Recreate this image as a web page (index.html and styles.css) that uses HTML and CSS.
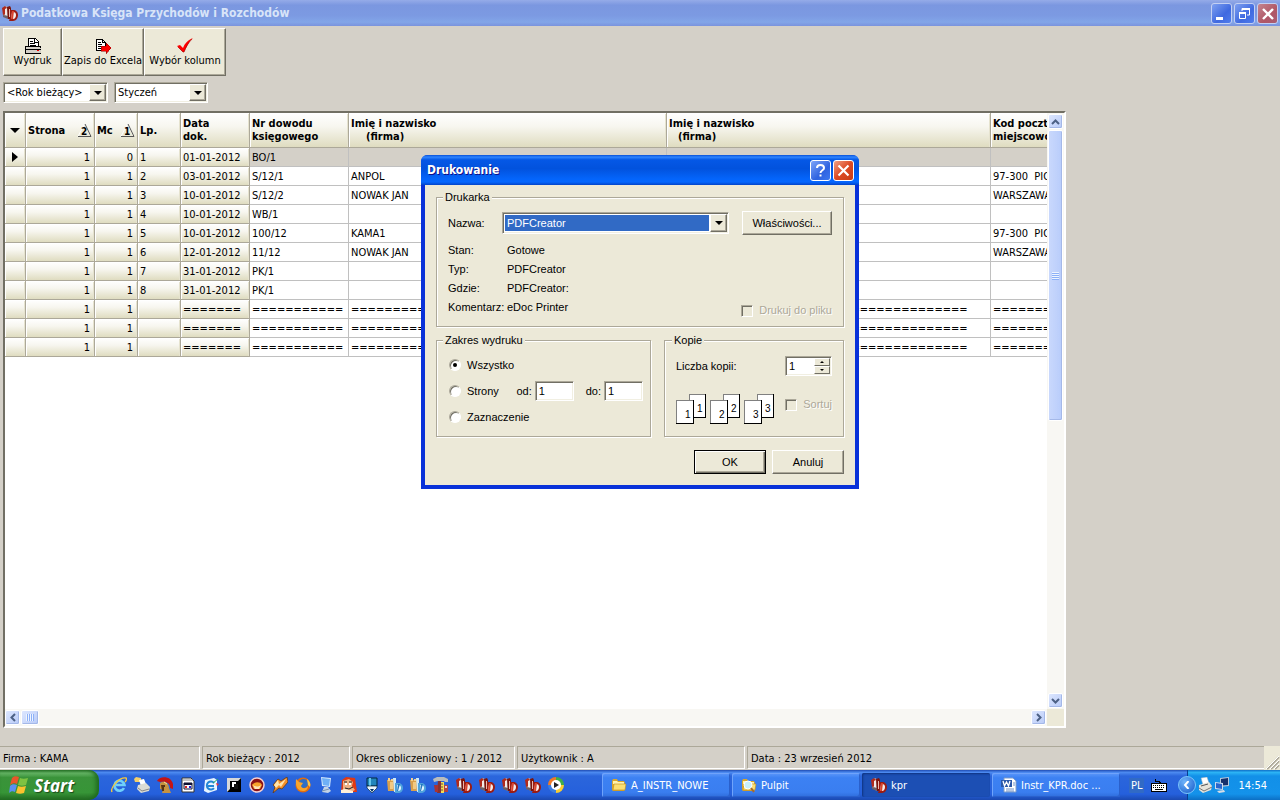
FILE: index.html
```html
<!DOCTYPE html>
<html lang="pl">
<head>
  <meta charset="UTF-8">
  <meta name="viewport" content="width=device-width, initial-scale=1.0">
  <title>Podatkowa Księga Przychodów i Rozchodów</title>
  <link rel="stylesheet" href="styles.css">
</head>
<body>
  <!-- Ikony -->
  <svg class="sprites" width="0" height="0" aria-hidden="true">
    <symbol id="kpr" viewBox="0 0 16 16">
      <path d="M1 3l3-2 5 3v9l-3 1-5-3z" fill="#b8a9a6"/>
      <path d="M0 3l3-2 2 2-1 6-3 1z" fill="#b02a1c"/>
      <path d="M3 4l2-1v8l-2-1z" fill="#f2ebe8"/>
      <path d="M1 10l5 1v3l-5-2z" fill="#6e5f66"/>
      <path d="M5 2l3-1 1 2v11H6z" fill="#7c140c"/>
      <path d="M7 4h1v8H7z" fill="#e8b8ac"/>
      <path d="M8 5h3c3 0 5 2 5 5s-2 6-5 6H7l1-3z" fill="#9b1c12"/>
      <path d="M10 7h1c2 0 3 1 3 3s-1 4-3 4h-2z" fill="#f6ece8"/>
      <path d="M10 6h2l-1 8H9z" fill="#d8442e"/>
    </symbol>
    <symbol id="kprblue" viewBox="0 0 16 16">
      <path d="M0 3h7v11H1z" fill="#d9a04c"/>
      <path d="M1 1h2v3H1zM4 2h2v2H4z" fill="#f3cf8d"/>
      <path d="M3 5h3v7H3z" fill="#f1c982"/>
      <path d="M6 1h3v14H7z" fill="#cfeaf8"/>
      <path d="M8 6h3c3 0 5 2 5 5s-2 5-5 5H8z" fill="#4fa3dc"/>
      <path d="M10 8h1c2 0 3 1 3 3s-1 3-3 3h-1z" fill="#e6f6ff"/>
      <path d="M11 7h2l-2 7h-1z" fill="#2478c0"/>
    </symbol>
    <symbol id="folder" viewBox="0 0 16 16">
      <path d="M1 4l1-2h4l1 2h6l1 2v7l-1 1H2l-1-1z" fill="#d9a62c"/>
      <path d="M2 4h4l1 1h6v2H2z" fill="#fff3ae"/>
      <path d="M3 7h12l-1 6H2z" fill="#fbdf72" stroke="#c08c1a" stroke-width=".6"/>
    </symbol>
  </svg>

  <div class="app">
    <header class="titlebar">
      <svg class="icon"><use href="#kpr"/></svg>
      <h1>Podatkowa Księga Przychodów i Rozchodów</h1>
      <div class="window-buttons">
        <button type="button" class="win-btn" aria-label="Minimalizuj">
          <svg width="20" height="20" viewBox="0 0 20 20"><path d="M4 13h7v3H4z" fill="#fff"/></svg>
        </button>
        <button type="button" class="win-btn" aria-label="Przywróć">
          <svg width="20" height="20" viewBox="0 0 20 20" fill="none" stroke="#fff"><path d="M7 7V4.500h7.500V11H12"/><path d="M7 5h8" stroke-width="2"/><path d="M4.500 8.500h6v6h-6z"/><path d="M4 9h7" stroke-width="2"/></svg>
        </button>
        <button type="button" class="win-btn win-close" aria-label="Zamknij">
          <svg width="20" height="20" viewBox="0 0 20 20"><path d="M5 5l10 10M15 5L5 15" stroke="#fff" stroke-width="2.400"/></svg>
        </button>
      </div>
    </header>

    <nav class="toolbar">
      <button type="button" class="tool tool-small">
        <svg class="icon" viewBox="0 0 16 16" shape-rendering="crispEdges">
          <path d="M3 8V0h7l3 3v5z" fill="#fff" stroke="#000"/>
          <path d="M9 0v4h4M5 3h3M5 5h5M5 7h6" fill="none" stroke="#000"/>
          <path d="M1 8h14l1 2v5H0v-5z" fill="#d4d0c8" stroke="#000"/>
          <path d="M0 11h16" stroke="#000"/>
          <path d="M12 12h2v1h-2z" fill="#e00"/>
        </svg>
        Wydruk
      </button>
      <button type="button" class="tool">
        <svg class="icon" viewBox="0 0 16 16" shape-rendering="crispEdges">
          <path d="M1 1h6l3 3v8H1z" fill="#fff" stroke="#000"/>
          <path d="M3 4h3M3 6h4M3 8h4M3 10h3M7 1v3h3" fill="none" stroke="#000"/>
          <path d="M6 8h5V5l5 5-5 6v-3H6z" fill="#f00" stroke="#800" stroke-width=".5"/>
        </svg>
        Zapis do Excela
      </button>
      <button type="button" class="tool">
        <svg class="icon" viewBox="0 0 16 16"><path d="M0 8l3-1 3 3c2-5 5-8 10-10-4 3-6 8-9 14H6z" fill="#f00"/><path d="M1 9l5 5h1c2-5 4-9 8-13" fill="none" stroke="#a00" stroke-width=".7"/></svg>
        Wybór kolumn
      </button>
    </nav>

    <div class="filters">
      <span class="combo combo-year">
        <select aria-label="Rok"><option>&lt;Rok bieżący&gt;</option></select>
        <span class="combo-arrow"></span>
      </span>
      <span class="combo combo-month">
        <select aria-label="Miesiąc"><option>Styczeń</option></select>
        <span class="combo-arrow"></span>
      </span>
    </div>

    <!-- Tabela księgi -->
    <main class="grid-panel">
      <div class="grid-view">
        <table class="ledger">
          <colgroup>
            <col class="c-mark"><col class="c-page"><col class="c-mc"><col class="c-lp"><col class="c-date">
            <col class="c-doc"><col class="c-name"><col class="c-name2"><col class="c-post">
          </colgroup>
          <thead>
            <tr>
              <th><span class="tri-down"></span></th>
              <th><div class="sorted">Strona <svg class="sort" width="15" height="15" viewBox="0 0 15 15"><path d="M7.500 1L1 13.500h13z" fill="#ece9d8" stroke="#fff"/><path d="M8 1l6 12.500H1" fill="none" stroke="#555"/><text x="4" y="12">2</text></svg></div></th>
              <th><div class="sorted">Mc <svg class="sort" width="15" height="15" viewBox="0 0 15 15"><path d="M7.500 1L1 13.500h13z" fill="#ece9d8" stroke="#fff"/><path d="M8 1l6 12.500H1" fill="none" stroke="#555"/><text x="4" y="12">1</text></svg></div></th>
              <th>Lp.</th>
              <th>Data<br>dok.</th>
              <th>Nr dowodu<br>księgowego</th>
              <th>Imię i nazwisko<br><span class="indent">(firma)</span></th>
              <th>Imię i nazwisko<br><span class="indent indent-small">(firma)</span></th>
              <th>Kod pocztowy<br>miejscowość</th>
            </tr>
          </thead>
          <tbody>
            <tr class="current"><td><span class="tri-right"></span></td><td>1</td><td>0</td><td>1</td><td>01-01-2012</td><td>BO/1</td><td></td><td></td><td></td></tr>
            <tr><td></td><td>1</td><td>1</td><td>2</td><td>03-01-2012</td><td>S/12/1</td><td>ANPOL</td><td></td><td>97-300&nbsp; PIOTRKÓW</td></tr>
            <tr><td></td><td>1</td><td>1</td><td>3</td><td>10-01-2012</td><td>S/12/2</td><td>NOWAK JAN</td><td></td><td>WARSZAWA</td></tr>
            <tr><td></td><td>1</td><td>1</td><td>4</td><td>10-01-2012</td><td>WB/1</td><td></td><td></td><td></td></tr>
            <tr><td></td><td>1</td><td>1</td><td>5</td><td>10-01-2012</td><td>100/12</td><td>KAMA1</td><td></td><td>97-300&nbsp; PIOTRKÓW</td></tr>
            <tr><td></td><td>1</td><td>1</td><td>6</td><td>12-01-2012</td><td>11/12</td><td>NOWAK JAN</td><td></td><td>WARSZAWA</td></tr>
            <tr><td></td><td>1</td><td>1</td><td>7</td><td>31-01-2012</td><td>PK/1</td><td></td><td></td><td></td></tr>
            <tr><td></td><td>1</td><td>1</td><td>8</td><td>31-01-2012</td><td>PK/1</td><td></td><td></td><td></td></tr>
            <tr><td></td><td>1</td><td>1</td><td></td><td>=======</td><td>===========</td><td>====================================</td><td>====================================</td><td>===========</td></tr>
            <tr><td></td><td>1</td><td>1</td><td></td><td>=======</td><td>===========</td><td>====================================</td><td>====================================</td><td>===========</td></tr>
            <tr><td></td><td>1</td><td>1</td><td></td><td>=======</td><td>===========</td><td>====================================</td><td>====================================</td><td>===========</td></tr>
          </tbody>
        </table>
      </div>
      <div class="scroll scroll-v">
        <button type="button" class="scroll-btn" aria-label="W górę"><svg width="9" height="6" viewBox="0 0 9 6"><path d="M1 5l3.500-3.500L8 5"/></svg></button>
        <div class="thumb thumb-v"><span class="grip-v"></span></div>
        <button type="button" class="scroll-btn scroll-end" aria-label="W dół"><svg width="9" height="6" viewBox="0 0 9 6"><path d="M1 1l3.500 3.500L8 1"/></svg></button>
      </div>
      <div class="scroll scroll-h">
        <button type="button" class="scroll-btn" aria-label="W lewo"><svg width="6" height="9" viewBox="0 0 6 9"><path d="M5 1L1.500 4.500 5 8"/></svg></button>
        <div class="thumb thumb-h"><span class="grip-h"></span></div>
        <button type="button" class="scroll-btn scroll-end" aria-label="W prawo"><svg width="6" height="9" viewBox="0 0 6 9"><path d="M1 1l3.500 3.500L1 8"/></svg></button>
      </div>
      <div class="corner"></div>
    </main>

    <footer class="statusbar">
      <div class="st st-company">Firma : KAMA</div>
      <div class="st st-year">Rok bieżący : 2012</div>
      <div class="st st-period">Okres obliczeniowy : 1 / 2012</div>
      <div class="st st-user">Użytkownik : A</div>
      <div class="st st-date">Data : 23 wrzesień 2012</div>
      <svg class="size-grip" width="16" height="24" viewBox="0 0 16 24"><path d="M3 23L15 11M7 23l8-8M11 23l4-4" stroke="#aca899" stroke-width="2"/><path d="M2 23L15 10M6 23l9-9M10 23l5-5" stroke="#fff"/></svg>
    </footer>

    <!-- Pasek zadań -->
    <div class="taskbar">
      <button type="button" class="start">
        <svg width="20" height="20" viewBox="0 0 20 20">
          <path d="M3 3c2-2 4-2 7-1L8 9C6 8 4 8 1 10z" fill="#e8562a"/>
          <path d="M11 3c2 1 5 1 8 0l-2 7c-3 1-5 1-8 0z" fill="#7fc242"/>
          <path d="M1 11c2-2 4-2 7-1l-2 7c-2-1-4-1-6 1z" fill="#5a8ff0"/>
          <path d="M9 11c2 1 5 1 8 0l-2 7c-3 1-5 1-8 0z" fill="#fbc22e"/>
        </svg>
        <span>Start</span>
      </button>

      <div class="quick">
        <svg class="icon" viewBox="0 0 16 16"><path d="M13 11a5 5 0 1 1 .5-3H5" fill="none" stroke="#6fd0fb" stroke-width="2.600"/><path d="M1 15C-1 11 8 0 15 1c1 1 0 3-1 4" fill="none" stroke="#f5c83c" stroke-width="1.400"/></svg>
        <svg class="icon" viewBox="0 0 16 16"><path d="M0 2l2-2 5 1v4H1z" fill="#f4cf6a"/><path d="M5 3l5-1 2 5-5 2z" fill="#fff"/><path d="M4 8l8-2 4 4-1 4-8 2-4-4z" fill="#dcdcd4"/><path d="M4 11l4 3 7-2" fill="none" stroke="#888"/></svg>
        <svg class="icon" viewBox="0 0 16 16"><path d="M0 4c2-5 14-6 16 3v5l-3-1c1-5-5-7-10-6z" fill="#c41414"/><path d="M3 6c4-3 9 0 9 5l2 5H5l1-3-3-1z" fill="#c69240"/><path d="M4 8h4v2H7v4H5z" fill="#5a3410"/><path d="M7 5l3 2" stroke="#ffe08a"/></svg>
        <svg class="icon" viewBox="0 0 16 16"><path d="M2 1h9l3 3v11H2z" fill="#fff" stroke="#333"/><path d="M2 3h11" stroke="#888"/><path d="M4 6h8v6H4z" fill="#fff" stroke="#113"/><path d="M4 6h8v2H4z" fill="#113"/><path d="M5 9h2v2H5z" fill="#d22"/><path d="M9 9h2v2H9z" fill="#22d"/></svg>
        <svg class="icon" viewBox="0 0 16 16"><path d="M2 3l9-2 3 2v10l-9 3-4-2z" fill="#e7f4ff"/><path d="M11 6a4 4 0 1 0 0 5M5 9h6" fill="none" stroke="#2285d6" stroke-width="2"/><path d="M10 6l5-4" stroke="#2a6"/><path d="M13 6l3 1-2 2z" fill="#e33"/></svg>
        <svg class="icon" viewBox="0 0 16 16"><path d="M1 1h14v14H1z" fill="#000"/><path d="M1 1h14l-3 3H4v8l-3 3z" fill="#d8d8d8"/><path d="M6 5h4v5H6z" fill="#fff"/><path d="M8 7h4v5H8z" fill="#111"/></svg>
        <svg class="icon" viewBox="0 0 16 16"><circle cx="8" cy="8" r="7" fill="#8c1014" stroke="#f6cfd0" stroke-width="1.500"/><path d="M3 8c2-3 8-4 10 0l-2 4H5z" fill="#f8a32b"/><path d="M4 8c3 2 5 2 8 0l-2 4H6z" fill="#ffe3bb"/></svg>
        <svg class="icon" viewBox="0 0 16 16"><path d="M1 8l5-6 3 2 6-4 1 5-6 7-3-1-6 5 2-6z" fill="#f5902a" stroke="#5c3a20" stroke-width=".8"/><path d="M2 8l4-5 1 4 7-5-5 8-2-2-3 3z" fill="#ffe5b0"/></svg>
        <svg class="icon" viewBox="0 0 16 16"><circle cx="8" cy="8" r="7.500" fill="#e06c10"/><circle cx="8.500" cy="6.500" r="4.500" fill="#2e6fc4"/><path d="M1 2l3 3 4 1-2 3c1 3 5 3 7 0 0 3-2 5-5 5-4 0-8-3-7-12z" fill="#f8a52b"/><path d="M12 2c3 2 4 5 3 8l-2-2z" fill="#fbc648"/></svg>
        <svg class="icon" viewBox="0 0 16 16"><path d="M3 0l10 1-1 9-8-1z" fill="#d4e8fc"/><path d="M4 1l8 1-1 7-6-1z" fill="#6fb0f6"/><path d="M6 10h4l3 4-3 2-6-1z" fill="#c3d3e6"/><path d="M4 14l7-2" stroke="#7690ae"/></svg>
        <svg class="icon" viewBox="0 0 16 16"><path d="M1 3l4-3 9 1 2 14H0z" fill="#e03a14"/><path d="M2 4l6-2 4 3-1 4 3 4-6 3-6-2z" fill="#edb184"/><path d="M3 5h3M8 5h3M4 11l4 1 4-2" stroke="#222" fill="none"/><path d="M4 6h2v2H4zM8 6h2v2H8z" fill="#fff"/><path d="M0 13l4-1 8 2v2H0z" fill="#fff0d8"/></svg>
        <svg class="icon" viewBox="0 0 16 16"><path d="M3 1h10v8H3z" fill="#2186bc" stroke="#03263f"/><path d="M5 1h2v8H5z" fill="#65c5ea"/><path d="M3 9h10v2l-5 5-5-5z" fill="#eaf4fa" stroke="#03263f" stroke-width=".7"/><path d="M6 12h4l-2 3z" fill="#036"/></svg>
        <svg class="icon"><use href="#kprblue"/></svg>
        <svg class="icon"><use href="#kprblue"/></svg>
        <svg class="icon" viewBox="0 0 16 16"><path d="M0 2l4-2h7l4 2v3h-3L11 4H5L1 5z" fill="#b9bcbc"/><path d="M5 4h3v12H4z" fill="#863232"/><path d="M1 8h4v7H2z" fill="#a33"/><path d="M8 5h3v11H8z" fill="#f5dc54"/><path d="M11 8h4v7h-4z" fill="#b34444"/><path d="M8 7h2M8 10h2M8 13h2" stroke="#654"/><path d="M12 9h2v2h-2z" fill="#ecc"/></svg>
        <svg class="icon"><use href="#kpr"/></svg>
        <svg class="icon"><use href="#kpr"/></svg>
        <svg class="icon"><use href="#kpr"/></svg>
        <svg class="icon"><use href="#kpr"/></svg>
        <svg class="icon" viewBox="0 0 16 16"><path d="M8 0a8 8 0 0 0-8 8h8z" fill="#ef7a26"/><path d="M8 0a8 8 0 0 1 8 8H8z" fill="#3fae48"/><path d="M16 8a8 8 0 0 1-8 8V8z" fill="#f9cd31"/><path d="M8 16a8 8 0 0 1-8-8h8z" fill="#3a7de0"/><circle cx="8" cy="8" r="5" fill="#fff"/><path d="M6 5l5 3-5 3z" fill="#222"/></svg>
      </div>

      <div class="tasks">
        <button type="button" class="task"><svg class="icon"><use href="#folder"/></svg>A_INSTR_NOWE</button>
        <button type="button" class="task"><svg class="icon" viewBox="0 0 16 16"><use href="#folder"/><circle cx="7" cy="8" r="4" fill="#c9f0fb" stroke="#fff"/><path d="M10 11l3 4" stroke="#a8682c" stroke-width="2"/></svg>Pulpit</button>
        <button type="button" class="task task-active"><svg class="icon"><use href="#kpr"/></svg>kpr</button>
        <button type="button" class="task"><svg class="icon" viewBox="0 0 16 16"><path d="M3 1h9l3 3v11H3z" fill="#fff" stroke="#7f9cc8"/><path d="M12 6h2M12 8h2M5 12h8M5 14h8" stroke="#6f8ec4"/><path d="M0 3h11v7H0z" fill="#2b57a8"/><path d="M2 4l1.500 5L5.500 5l2 4L9 4" fill="none" stroke="#fff" stroke-width="1.300"/></svg>Instr_KPR.doc ...</button>
      </div>

      <div class="lang">
        <span class="lang-code">PL</span>
        <svg class="icon" viewBox="0 0 16 16" shape-rendering="crispEdges"><path d="M4 2v2h4v1h1v2" fill="none" stroke="#000"/><path d="M0 6h16v9H0z" fill="#000"/><path d="M1 7h14v7H1z" fill="#fff"/><path d="M2 8.500h12M2 10.500h12" stroke="#000" stroke-dasharray="1 1"/><path d="M4 12.500h8" stroke="#000"/></svg>
      </div>
      <div class="tray">
        <button type="button" class="tray-arrow" aria-label="Pokaż ukryte ikony"><svg width="8" height="8" viewBox="0 0 8 8"><path d="M5.500 0L2 4l3.500 4" fill="none" stroke="#fff" stroke-width="2"/></svg></button>
        <svg class="icon" viewBox="0 0 16 16"><path d="M4 1l6-1 2 6-6 2z" fill="#fff" stroke="#9ab" stroke-width=".5"/><path d="M2 8l10-3 3 4-1 4-8 3-4-3z" fill="#e6e4da"/><path d="M2 11l5 3 8-4" fill="none" stroke="#777"/><path d="M4 9l7-2" stroke="#555"/></svg>
        <svg class="icon" viewBox="0 0 16 16"><path d="M6 1l9-1v9l-9 1z" fill="#b7c7dc"/><path d="M7 2l7-1v7l-7 .5z" fill="#16306c"/><path d="M1 5l8 1v7l-8-1z" fill="#cfdcec"/><path d="M2 6l6 1v5l-6-1z" fill="#2a66cc"/><path d="M3 14l7-1 1 2-6 1z" fill="#d6dde6"/></svg>
        <time class="clock">14:54</time>
      </div>
    </div>
  </div>

  <!-- Okno drukowania -->
  <form class="dialog" role="dialog" aria-labelledby="dialogTitle">
    <div class="dialog-title">
      <h2 id="dialogTitle">Drukowanie</h2>
      <button type="button" class="dlg-btn" aria-label="Pomoc"><svg width="19" height="19" viewBox="0 0 19 19"><path d="M6 7c0-4 7-4 7 0 0 2.500-3.500 2-3.500 5" fill="none" stroke="#fff" stroke-width="2"/><path d="M8.500 13.500h2v2h-2z" fill="#fff"/></svg></button>
      <button type="button" class="dlg-btn dlg-close" aria-label="Zamknij"><svg width="19" height="19" viewBox="0 0 19 19"><path d="M4.500 4.500l10 10M14.500 4.500l-10 10" stroke="#fff" stroke-width="2.200"/></svg></button>
    </div>
    <div class="dialog-body">
      <fieldset class="printer">
        <legend>Drukarka</legend>
        <div class="printer-row">
          <label for="printer">Nazwa:</label>
          <span class="combo combo-printer">
            <select id="printer"><option>PDFCreator</option></select>
            <span class="combo-arrow"></span>
          </span>
          <button type="button" class="btn btn-props">Właściwości...</button>
        </div>
        <div class="printer-info">
          <dl>
            <dt>Stan:</dt><dd>Gotowe</dd>
            <dt>Typ:</dt><dd>PDFCreator</dd>
            <dt>Gdzie:</dt><dd>PDFCreator:</dd>
            <dt>Komentarz:</dt><dd>eDoc Printer</dd>
          </dl>
          <label class="check"><input type="checkbox" disabled>Drukuj do pliku</label>
        </div>
      </fieldset>

      <div class="groups">
        <fieldset class="range">
          <legend>Zakres wydruku</legend>
          <div class="range-row"><label class="radio"><input type="radio" name="range" checked>Wszystko</label></div>
          <div class="range-row">
            <label class="radio radio-pages"><input type="radio" name="range">Strony</label>
            <label for="from">od:</label><input type="text" class="field" id="from" value="1">
            <label for="to" class="to">do:</label><input type="text" class="field" id="to" value="1">
          </div>
          <div class="range-row"><label class="radio"><input type="radio" name="range">Zaznaczenie</label></div>
        </fieldset>

        <fieldset class="copies">
          <legend>Kopie</legend>
          <div class="copies-row">
            <label for="copies">Liczba kopii:</label>
            <span class="spinner">
              <input type="text" id="copies" value="1">
              <span class="spin-buttons">
                <button type="button" aria-label="Więcej"><span class="spin-up"></span></button>
                <button type="button" aria-label="Mniej"><span class="spin-down"></span></button>
              </span>
            </span>
          </div>
          <div class="copies-row collate">
            <svg class="pages" width="100" height="32" viewBox="0 0 100 32" shape-rendering="crispEdges">
              <g id="sheet">
                <path d="M13.500.5h16v23h-16z" fill="#fff" stroke="#808080"/><path d="M13 23.500h17M29.500 0v24" stroke="#000"/>
                <path d="M.5 6.500h17v23H.5z" fill="#fff" stroke="#808080"/><path d="M0 29.500h18M17.500 6v24" stroke="#000"/>
              </g>
              <use href="#sheet" x="34"/>
              <use href="#sheet" x="68"/>
              <text x="9" y="24">1</text><text x="21" y="18">1</text>
              <text x="43" y="24">2</text><text x="55" y="18">2</text>
              <text x="77" y="24">3</text><text x="89" y="18">3</text>
            </svg>
            <label class="check"><input type="checkbox" disabled>Sortuj</label>
          </div>
        </fieldset>
      </div>

      <div class="dialog-buttons">
        <button type="button" class="btn btn-default">OK</button>
        <button type="button" class="btn">Anuluj</button>
      </div>
    </div>
  </form>
</body>
</html>
```

FILE: styles.css
```css
* {
  box-sizing: border-box;
}
body {
  margin: 0;
  background: #d4d0c8;
  color: #000;
  font-family: "DejaVu Sans Condensed", "DejaVu Sans", sans-serif;
  font-size: 11px;
  line-height: 13px;
}
button, input, select {
  margin: 0;
  padding: 0;
  border: 0;
  border-radius: 0;
  font: inherit;
  color: inherit;
}
h1, h2, dl, dd {
  margin: 0;
}
.sprites {
  position: absolute;
}
.icon {
  display: block;
  flex: none;
  width: 16px;
  height: 16px;
}
.app {
  display: flex;
  flex-direction: column;
  height: 100vh;
}

/* pasek tytułu */
.titlebar {
  display: flex;
  align-items: center;
  gap: 3px;
  height: 26px;
  flex: none;
  padding: 0 2px;
  background: linear-gradient(#95abe8, #7b97e0 20%, #7c9ae2 60%, #82a5e8 85%, #7a93dd);
}
.titlebar h1 {
  flex: 1;
  font-size: 12px;
  color: #d8e4f8;
}
.window-buttons {
  display: flex;
  gap: 2px;
}
.win-btn {
  width: 21px;
  height: 21px;
  padding: 0;
  border: 1px solid #c3d0f3;
  border-radius: 3px;
  background: linear-gradient(135deg, #7ea0f0, #3f69e0 60%, #4f7cec);
}
.win-close {
  background: linear-gradient(135deg, #c4858f, #b05766 60%, #a85c72);
}
.win-btn svg, .dlg-btn svg {
  display: block;
}

/* przyciski */
.toolbar {
  display: flex;
  flex: none;
  padding: 2px 3px;
}
.tool {
  display: flex;
  flex-direction: column;
  align-items: center;
  justify-content: center;
  width: 82px;
  height: 48px;
  white-space: nowrap;
  background: #ece9d8;
  border: 1px solid #fff;
  border-right-color: #716f64;
  border-bottom-color: #716f64;
  box-shadow: inset -1px -1px #aca899;
}
.tool-small {
  width: 59px;
}
.filters {
  display: flex;
  flex: none;
  gap: 6px;
  padding: 4px 3px 8px;
}
.combo {
  display: grid;
  height: 21px;
  background: #fff;
  border: 1px solid #aca899;
  border-right-color: #fff;
  border-bottom-color: #fff;
  box-shadow: inset 1px 1px #716f64, inset -1px -1px #f1efe2;
  padding: 1px;
}
.combo-year {
  width: 105px;
}
.combo-month {
  width: 94px;
}
.combo select {
  grid-area: 1 / 1;
  appearance: none;
  padding-left: 2px;
  background: transparent;
  outline: none;
}
.combo-arrow {
  grid-area: 1 / 1;
  justify-self: end;
  display: grid;
  place-items: center;
  width: 17px;
  pointer-events: none;
  background: #ece9d8;
  border: 1px solid #fff;
  border-right-color: #716f64;
  border-bottom-color: #716f64;
  box-shadow: inset -1px -1px #aca899;
}
.combo-arrow::before, .tri-down {
  content: "";
  border: 4px solid transparent;
  border-top-color: #000;
  border-bottom: 0;
}

/* siatka */
.grid-panel {
  flex: 1;
  min-height: 0;
  display: grid;
  grid-template-columns: minmax(0, 1fr) 17px;
  grid-template-rows: minmax(0, 1fr) 17px;
  margin: 0 214px 17px 3px;
  background: #fff;
  border: 2px solid #fff;
  border-top-color: #716f64;
  border-left-color: #716f64;
}
.grid-view {
  overflow: hidden;
}
.ledger {
  width: 1106px;
  table-layout: fixed;
  border-collapse: separate;
  border-spacing: 0;
}
.c-mark { width: 21px; }
.c-page { width: 69px; }
.c-mc { width: 43px; }
.c-lp { width: 43px; }
.c-date { width: 69px; }
.c-doc { width: 99px; }
.c-name { width: 318px; }
.c-name2 { width: 324px; }
.c-post { width: 120px; }
.ledger th, .ledger td {
  padding: 0 2px;
  overflow: hidden;
  white-space: nowrap;
  text-align: left;
  border-right: 1px solid #c0c0c0;
  border-bottom: 1px solid #c0c0c0;
}
.ledger th {
  height: 35px;
}
.ledger td {
  height: 19px;
}
.ledger th, .ledger td:nth-child(-n+5) {
  border-color: #aca899;
  background: linear-gradient(#fff, #f7f6ef 40%, #dfdcc0);
  box-shadow: inset 1px 1px #fff, inset -1px 0 #e6e3cf;
}
.ledger td:nth-child(2), .ledger td:nth-child(3) {
  text-align: right;
  padding-right: 4px;
}
.ledger .current td:nth-child(n+6) {
  background: #d4d0c8;
}
.sorted {
  display: flex;
  align-items: center;
  justify-content: space-between;
}
.sort {
  flex: none;
}
.sort text {
  font-size: 10px;
  font-weight: bold;
}
.indent {
  padding-left: 15px;
}
.indent-small {
  padding-left: 9px;
}
.tri-down {
  display: block;
  width: 0;
  margin: 0 auto;
  border-width: 5px 5px 0;
}
.tri-right {
  display: block;
  width: 0;
  margin: 0 auto;
  border: 5px solid transparent;
  border-left: 6px solid #000;
  border-right: 0;
}

/* paski przewijania */
.scroll {
  display: flex;
  gap: 1px;
  padding: 1px;
  background: #f8f7f3;
}
.scroll-v {
  flex-direction: column;
}
.scroll-h {
  padding-left: 0;
}
.scroll-btn, .thumb {
  display: grid;
  place-items: center;
  flex: none;
  width: 15px;
  height: 15px;
  background: linear-gradient(135deg, #dce6fe, #b9cbf8);
  border: 1px solid #fff;
  border-radius: 2px;
  box-shadow: inset -1px -1px #a4b8e8;
}
.scroll-btn path {
  fill: none;
  stroke: #4d6185;
  stroke-width: 2;
}
.scroll-end {
  margin-top: auto;
}
.scroll-h .scroll-end {
  margin: 0 0 0 auto;
}
.thumb-v {
  height: 49%;
  background: linear-gradient(90deg, #c9d8fc, #b8ccfb);
}
.thumb-h {
  width: 18px;
}
.grip-v {
  width: 7px;
  height: 8px;
  background: repeating-linear-gradient(#eef4fe 0 1px, #8cb0f8 1px 2px);
}
.grip-h {
  width: 8px;
  height: 7px;
  background: repeating-linear-gradient(90deg, #eef4fe 0 1px, #8cb0f8 1px 2px);
}
.corner {
  background: #ece9d8;
}

/* pasek stanu */
.statusbar {
  display: flex;
  flex: none;
  gap: 2px;
  height: 25px;
  padding: 1px 0;
}
.st {
  display: flex;
  align-items: center;
  padding: 1px 0 0 3px;
  white-space: nowrap;
  border: 1px solid #aca899;
  border-right-color: #fff;
  border-bottom-color: #fff;
}
.st-company {
  width: 200px;
  border-left: 0;
}
.st-year { width: 148px; }
.st-period { width: 163px; }
.st-user { width: 228px; }
.st-date {
  flex: 1;
  border-right: 0;
}
.size-grip {
  flex: none;
  margin-left: -2px;
  background: #ece9d8;
}

/* pasek zadań */
.taskbar {
  display: flex;
  flex: none;
  height: 30px;
  color: #fff;
  background: linear-gradient(#1f4cb4, #4c8af0 8%, #2b66dc 20%, #2560dc 80%, #1b49b0);
}
.start {
  display: flex;
  align-items: center;
  gap: 5px;
  flex: none;
  width: 99px;
  padding-left: 9px;
  border-radius: 0 10px 10px 0;
  background: linear-gradient(#2f7a2f, #66b566 10%, #3a933a 25%, #379537 75%, #236b23);
  box-shadow: inset -3px 0 4px #1f6a1f;
  font-family: "Open Sans", "Noto Sans", sans-serif;
  font-size: 17px;
  font-weight: bold;
  font-style: italic;
  text-shadow: 1px 1px 1px #1a4a1a;
}
.quick {
  display: flex;
  flex: none;
  align-items: center;
  gap: 7px;
  padding-left: 12px;
}
.tasks {
  display: flex;
  flex: 1;
  gap: 2px;
  padding: 3px 0 3px 38px;
}
.task {
  display: flex;
  align-items: center;
  flex: 1;
  gap: 4px;
  max-width: 160px;
  padding-left: 9px;
  white-space: nowrap;
  border-radius: 2px;
  background: linear-gradient(#5c97fa, #3c81f3 20%, #3a7ef0 80%, #2f6cda);
  box-shadow: inset 1px 1px #6fa3fb, inset -1px -1px #2a60cc;
}
.task-active {
  background: #1c4fb4;
  box-shadow: inset 1px 1px 2px #0f3380;
}
.lang {
  display: flex;
  flex: none;
  align-items: center;
  gap: 7px;
  padding: 0 20px 0 9px;
}
.lang-code {
  padding: 1px 2px;
  background: #316ac5;
}
.tray {
  display: flex;
  flex: none;
  align-items: center;
  gap: 1px;
  padding-right: 13px;
  border-left: 1px solid #0a3f90;
  background: linear-gradient(#0f6fc8, #2cb4f5 8%, #1290e8 20%, #1492ea 80%, #0c6fc4);
}
.tray-arrow {
  display: grid;
  place-items: center;
  width: 18px;
  height: 18px;
  margin-left: -10px;
  border: 1px solid #7cc6fa;
  border-radius: 50%;
  background: radial-gradient(circle at 35% 30%, #6fb4fb, #1559c8);
}
.clock {
  margin-left: 7px;
}

/* okno dialogowe */
.dialog {
  position: absolute;
  top: 155px;
  left: 50%;
  width: 438px;
  margin-left: -219px;
  border: 4px solid #0831d9;
  border-top: 0;
  border-radius: 7px 7px 0 0;
  background: #ece9d8;
  font-family: "Liberation Sans", Arial, sans-serif;
}
.dialog-title {
  display: flex;
  align-items: center;
  gap: 2px;
  height: 30px;
  margin: 0 -4px;
  padding: 1px 5px 0 6px;
  border-radius: 6px 6px 0 0;
  background: linear-gradient(#0850d8, #2f84ff 7%, #0558e6 16%, #0252dd 45%, #0465fb 80%, #0567ff 90%, #0344c8);
  color: #fff;
}
.dialog-title h2 {
  flex: 1;
  font-family: "DejaVu Sans Condensed", "DejaVu Sans", sans-serif;
  font-size: 12px;
  text-shadow: 1px 1px #0f1089;
}
.dlg-btn {
  width: 21px;
  height: 21px;
  border: 1px solid #fff;
  border-radius: 3px;
  background: linear-gradient(135deg, #7fa5f8, #2f63e0 60%, #3c78f0);
}
.dlg-close {
  background: linear-gradient(135deg, #f0a084, #dd4a24 50%, #c83c14);
}
.dialog-body {
  padding: 6px 11px 11px;
}
fieldset {
  min-width: 0;
  margin: 0;
  padding: 0;
  border: 1px solid #aca899;
  box-shadow: 1px 1px #fff, inset 1px 1px #fff;
}
legend {
  margin-left: 6px;
  padding: 0 2px;
  background: #ece9d8;
}
.printer {
  height: 136px;
  padding: 7px 11px 0;
}
.printer legend {
  margin-left: -5px;
}
.printer-row {
  display: flex;
  align-items: center;
}
.printer-row label {
  width: 54px;
}
.combo-printer {
  flex: 1;
  height: 22px;
  margin-right: 13px;
}
.combo-printer select {
  margin: 1px 18px 1px 1px;
  background: #316ac5;
  color: #fff;
}
.printer-info {
  display: flex;
  align-items: flex-end;
  justify-content: space-between;
  padding-top: 6px;
}
.printer-info dl {
  display: grid;
  grid-template-columns: 59px auto;
  line-height: 19px;
}
.btn {
  width: 72px;
  height: 24px;
  background: #ece9d8;
  border: 1px solid #fff;
  border-right-color: #716f64;
  border-bottom-color: #716f64;
  box-shadow: inset -1px -1px #aca899;
}
.btn-props {
  width: 90px;
}
.btn-default {
  border-color: #000;
  box-shadow: inset 1px 1px #fff, inset -1px -1px #716f64, inset -2px -2px #aca899;
}
.check, .radio {
  display: flex;
  align-items: center;
  gap: 6px;
}
.check {
  color: #aca899;
  text-shadow: 1px 1px #fff;
}
.check input, .radio input {
  appearance: none;
  width: 12px;
  height: 12px;
  border: 1px solid #aca899;
  border-right-color: #fff;
  border-bottom-color: #fff;
  box-shadow: inset 1px 1px #716f64;
}
.radio input {
  display: grid;
  place-items: center;
  border-radius: 50%;
  background: #fff;
}
.radio input:checked::before {
  content: "";
  width: 4px;
  height: 4px;
  border-radius: 50%;
  background: #000;
}
.groups {
  display: flex;
  gap: 13px;
  padding-top: 7px;
}
.range {
  flex: 0 0 215px;
  height: 103px;
  padding: 5px 7px 0 12px;
}
.range legend {
  margin-left: -6px;
}
.range-row {
  display: flex;
  align-items: center;
  height: 26px;
}
.radio-pages {
  flex: 1;
}
.field, .spinner {
  height: 20px;
  background: #fff;
  border: 1px solid #aca899;
  border-right-color: #fff;
  border-bottom-color: #fff;
  box-shadow: inset 1px 1px #716f64, inset -1px -1px #f1efe2;
}
.field {
  width: 39px;
  margin-left: 3px;
  padding-left: 3px;
}
.to {
  margin-left: 12px;
}
.copies {
  flex: 1;
  padding: 9px 11px 0;
}
.copies legend {
  margin-left: -4px;
}
.copies-row {
  display: flex;
  align-items: center;
  justify-content: space-between;
}
.collate {
  align-items: flex-start;
  padding-top: 18px;
}
.collate .check {
  padding-top: 4px;
}
.pages {
  flex: none;
}
.pages text {
  font-size: 10px;
}
.spinner {
  display: flex;
  width: 47px;
  padding: 1px;
}
.spinner input {
  flex: 1;
  width: 10px;
  padding-left: 2px;
  background: transparent;
}
.spin-buttons {
  display: grid;
  width: 16px;
}
.spin-buttons button {
  display: grid;
  place-items: center;
  background: #ece9d8;
  border: 1px solid #fff;
  border-right-color: #716f64;
  border-bottom-color: #716f64;
}
.spin-up, .spin-down {
  border: 2px solid transparent;
  border-top: 0;
  border-bottom-color: #000;
}
.spin-down {
  border-top: 2px solid #000;
  border-bottom: 0;
}
.dialog-buttons {
  display: flex;
  justify-content: flex-end;
  gap: 6px;
  padding-top: 13px;
}
```
